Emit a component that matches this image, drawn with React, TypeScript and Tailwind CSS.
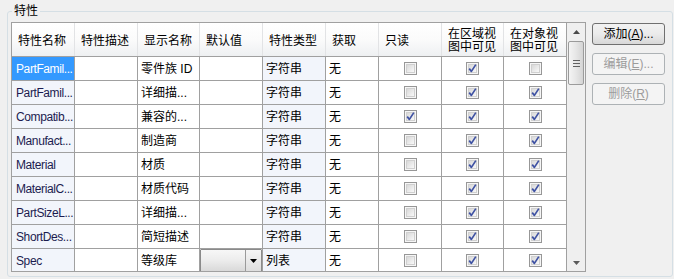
import React from "react";

type Row = {
  name: string;
  disp: string;
  type: string;
  ro: boolean;
  area: boolean;
  obj: boolean;
  sel?: boolean;
  combo?: boolean;
};

const rows: Row[] = [
  { name: "PartFamil...", disp: "零件族 ID", type: "字符串", ro: false, area: true, obj: false, sel: true },
  { name: "PartFamil...", disp: "详细描...", type: "字符串", ro: false, area: true, obj: true },
  { name: "Compatib...", disp: "兼容的...", type: "字符串", ro: true, area: true, obj: true },
  { name: "Manufact...", disp: "制造商", type: "字符串", ro: false, area: true, obj: true },
  { name: "Material", disp: "材质", type: "字符串", ro: false, area: true, obj: true },
  { name: "MaterialC...", disp: "材质代码", type: "字符串", ro: false, area: true, obj: true },
  { name: "PartSizeL...", disp: "详细描...", type: "字符串", ro: false, area: true, obj: true },
  { name: "ShortDes...", disp: "简短描述", type: "字符串", ro: false, area: true, obj: true },
  { name: "Spec", disp: "等级库", type: "列表", ro: false, area: true, obj: true, combo: true },
];

const gridCols = "grid grid-cols-[63px_63px_62px_63px_63px_53px_63px_62px_63px]";

function CheckBox({ checked }: { checked: boolean }) {
  return (
    <svg width="13" height="13" viewBox="0 0 13 13">
      <defs>
        <linearGradient id="cbfill" x1="0" y1="0" x2="1" y2="1">
          <stop offset="0" stopColor="#d6d6d6" />
          <stop offset="1" stopColor="#fbfbfb" />
        </linearGradient>
      </defs>
      <rect x="0.5" y="0.5" width="12" height="12" fill="#f6f6f6" stroke="#979797" />
      <rect x="2.5" y="2.5" width="8" height="8" fill="url(#cbfill)" stroke="#d0d0d0" />
      {checked && (
        <path d="M3.2 6.6 L5.4 9.4 L9.8 2.6" fill="none" stroke="#3f52a3" strokeWidth="1.7" strokeLinejoin="round" />
      )}
    </svg>
  );
}

function HeaderCell({ children, last }: { children: React.ReactNode; last?: boolean }) {
  return (
    <div
      className={
        "flex items-center pl-[6px] pt-[3px] text-[12px] leading-[13px] text-black border-r " +
        (last ? "border-[#a0a0a0]" : "border-[#e2e3e5]")
      }
    >
      {children}
    </div>
  );
}

function Cell({ children, className = "" }: { children?: React.ReactNode; className?: string }) {
  return (
    <div
      className={
        "h-[24px] flex items-center border-r border-b border-[#a0a0a0] overflow-hidden whitespace-nowrap text-[12px] leading-[14px] " +
        className
      }
    >
      {children}
    </div>
  );
}

function Combo() {
  return (
    <div className="w-full h-full flex border border-[#8a8a8a] rounded-[1px] bg-gradient-to-b from-[#f7f7f7] via-[#ececec] to-[#d9d9d9]">
      <div className="flex-1" />
      <div className="w-[16px] border-l border-[#9a9a9a] flex items-center justify-center bg-gradient-to-b from-[#f5f5f5] to-[#dedede]">
        <svg width="7" height="4" viewBox="0 0 7 4">
          <path d="M0 0 H7 L3.5 4 Z" fill="#000" />
        </svg>
      </div>
    </div>
  );
}

function Button({ label, accel, suffix, disabled }: { label: string; accel: string; suffix: string; disabled?: boolean }) {
  return (
    <div
      className={
        "h-[22px] w-[73px] rounded-[3px] border flex items-center justify-center text-[12px] leading-[14px] " +
        (disabled
          ? "border-[#adb2b5] bg-[#f4f4f4] text-[#9c9c9c]"
          : "border-[#707070] bg-gradient-to-b from-[#f2f2f2] via-[#ebebeb] to-[#d8d8d8] text-black")
      }
    >
      <span>
        {label}(<span className="underline">{accel}</span>){suffix}
      </span>
    </div>
  );
}

export default function App() {
  return (
    <div className="w-[674px] h-[279px] bg-[#f0f0f0] pt-[11px] pl-[7px] overflow-hidden font-['Liberation_Sans','Noto_Sans_CJK_SC',sans-serif]">
      <div className="w-[666px] h-[266px] border border-[#d5dfe5] rounded-[3px]">
        <div className="-mt-[8px] ml-[4px] w-fit px-[2px] bg-[#f0f0f0] text-[12px] leading-[14px] text-black">
          特性
        </div>
        <div className="flex mt-[4px] pl-[3px]">
          {/* grid */}
          <div className="w-[575px] h-[250px] border border-[#a0a0a0] flex bg-white">
            <div className="w-[555px] flex flex-col overflow-hidden">
              <div className={gridCols + " h-[34px] shrink-0 border-b border-[#a0a0a0] bg-gradient-to-b from-[#ffffff] via-[#fbfbfb] to-[#eef0f2]"}>
                <HeaderCell>特性名称</HeaderCell>
                <HeaderCell>特性描述</HeaderCell>
                <HeaderCell>显示名称</HeaderCell>
                <HeaderCell>默认值</HeaderCell>
                <HeaderCell>特性类型</HeaderCell>
                <HeaderCell>获取</HeaderCell>
                <HeaderCell>只读</HeaderCell>
                <HeaderCell>
                  <span>
                    在区域视
                    <br />
                    图中可见
                  </span>
                </HeaderCell>
                <HeaderCell last>
                  <span>
                    在对象视
                    <br />
                    图中可见
                  </span>
                </HeaderCell>
              </div>
              <div className={gridCols + " overflow-hidden"}>
                {rows.map((r, i) => (
                  <React.Fragment key={i}>
                    <Cell
                      className={
                        "pl-[4px] text-[11px] tracking-[-0.4px] " +
                        (r.sel ? "bg-[#3399ff] text-white" : "bg-[#f2f5fb] text-[#1c1c50]")
                      }
                    >
                      {r.name}
                    </Cell>
                    <Cell />
                    <Cell className="pl-[3px] text-black">{r.disp}</Cell>
                    <Cell className="p-0">{r.combo ? <Combo /> : null}</Cell>
                    <Cell className="pl-[3px] text-black bg-[#f2f5fb]">{r.type}</Cell>
                    <Cell className="pl-[3px] text-black">无</Cell>
                    <Cell className="justify-center">
                      <CheckBox checked={r.ro} />
                    </Cell>
                    <Cell className="justify-center">
                      <CheckBox checked={r.area} />
                    </Cell>
                    <Cell className="justify-center">
                      <CheckBox checked={r.obj} />
                    </Cell>
                  </React.Fragment>
                ))}
              </div>
            </div>
            {/* scrollbar */}
            <div className="w-[18px] flex flex-col bg-[#efefef]">
              <div className="h-[18px] shrink-0 flex items-center justify-center">
                <svg width="7" height="4" viewBox="0 0 7 4">
                  <path d="M0 4 H7 L3.5 0 Z" fill="#4a4a4a" />
                </svg>
              </div>
              <div className="h-[44px] shrink-0 mx-[1px] rounded-[2px] border border-[#9b9b9b] bg-gradient-to-r from-[#f4f4f4] via-[#e6e6e6] to-[#d4d4d4] flex items-center justify-center">
                <svg width="7" height="7" viewBox="0 0 7 7">
                  <path d="M0 0.5 H7 M0 3.5 H7 M0 6.5 H7" stroke="#606060" strokeWidth="1" />
                </svg>
              </div>
              <div className="flex-1" />
              <div className="h-[17px] shrink-0 flex items-center justify-center">
                <svg width="7" height="4" viewBox="0 0 7 4">
                  <path d="M0 0 H7 L3.5 4 Z" fill="#5a5a5a" />
                </svg>
              </div>
            </div>
          </div>
          {/* buttons */}
          <div className="ml-[6px] mt-[1px] flex flex-col gap-[8px]">
            <Button label="添加" accel="A" suffix="..." />
            <Button label="编辑" accel="E" suffix="..." disabled />
            <Button label="删除" accel="R" suffix="" disabled />
          </div>
        </div>
      </div>
    </div>
  );
}
